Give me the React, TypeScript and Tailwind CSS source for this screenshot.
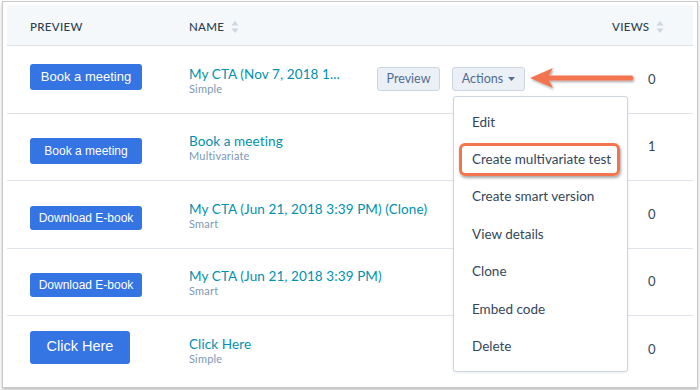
import React from "react";

const SortIcon = () => (
  <svg width="8" height="14" viewBox="0 0 8 14" className="ml-[7px]">
    <path d="M4 1 L7.5 5.5 H0.5 Z" fill="#cbd6e2" />
    <path d="M4 13 L7.5 8.5 H0.5 Z" fill="#cbd6e2" />
  </svg>
);

const rows = [
  { btn: "Book a meeting", btnCls: "w-[112px] h-[26px] text-[13px] -mt-[5px]", name: "My CTA (Nov 7, 2018 1...", sub: "Simple", views: "0" },
  { btn: "Book a meeting", btnCls: "w-[112px] h-[26px] text-[12px] mt-[8px]", name: "Book a meeting", sub: "Multivariate", views: "1" },
  { btn: "Download E-book", btnCls: "w-[112px] h-[24px] text-[12px] mt-[8px]", name: "My CTA (Jun 21, 2018 3:39 PM) (Clone)", sub: "Smart", views: "0" },
  { btn: "Download E-book", btnCls: "w-[112px] h-[24px] text-[12px] mt-[7px]", name: "My CTA (Jun 21, 2018 3:39 PM)", sub: "Smart", views: "0" },
  { btn: "Click Here", btnCls: "w-[100px] h-[33px] text-[14.5px] -mt-[5px]", name: "Click Here", sub: "Simple", views: "0" },
];

const menu = [
  "Edit",
  "Create multivariate test",
  "Create smart version",
  "View details",
  "Clone",
  "Embed code",
  "Delete",
];

export default function App() {
  return (
    <div className="relative w-[700px] h-[390px] bg-white overflow-hidden" style={{ fontFamily: "Lato, 'Open Sans', sans-serif" }}>
      <div className="ml-[2px] mt-[1px] w-[696px] h-[387px] border border-[#c9c9c9] bg-white shadow-[0_2px_3px_rgba(0,0,0,0.25)] px-[4px] pt-[3px]">
        {/* header */}
        <div className="flex items-center h-[41px] pt-[3px] bg-[#f5f8fa] border-b border-[#dfe3eb] text-[11.5px] font-medium text-[#2d3e50] tracking-[0.3px]">
          <div className="w-[182px] pl-[23px]">PREVIEW</div>
          <div className="flex-1 flex items-center">NAME<SortIcon /></div>
          <div className="w-[81px] flex items-center">VIEWS<SortIcon /></div>
        </div>
        {rows.map((r, i) => (
          <div key={i} className={`flex items-center h-[67.5px] ${i < 4 ? "border-b border-[#dfe3eb]" : ""}`}>
            <div className="w-[182px] pl-[23px] flex items-center">
              <div
                className={`${r.btnCls} bg-[#3574e3] rounded-[3px] text-white flex items-center justify-center`}
                style={{ fontFamily: "'Liberation Sans', Arial, sans-serif" }}
              >
                {r.btn}
              </div>
            </div>
            <div className="flex-1 flex items-center">
              <div className="flex flex-col mt-[2px]">
                <span className="text-[#0091ae] text-[13.5px] leading-[17px] tracking-[0.1px]">{r.name}</span>
                <span className="text-[#7c98b6] text-[11px] leading-[12px] tracking-[0.2px]">{r.sub}</span>
              </div>
              {i === 0 && (
                <div className="ml-auto mr-[87px] flex items-center gap-[12px] text-[12.5px] text-[#506e91]">
                  <div className="w-[63px] h-[24px] rounded-[3px] border border-[#cbd6e2] bg-[#eaf0f6] flex items-center justify-center">Preview</div>
                  <div className="w-[73px] h-[24px] rounded-[3px] border border-[#cbd6e2] bg-[#eaf0f6] flex items-center justify-center">
                    Actions
                    <svg width="7" height="4" viewBox="0 0 7 4" className="ml-[5px]"><path d="M0 0 H7 L3.5 4 Z" fill="#506e91" /></svg>
                  </div>
                </div>
              )}
            </div>
            <div className="w-[81px] pl-[36px] text-[13px] text-[#33475b]">{r.views}</div>
          </div>
        ))}
      </div>

      {/* arrow */}
      <svg className="absolute left-[527px] top-[64px]" width="112" height="30" viewBox="0 0 112 30">
        <defs>
          <filter id="sh" x="-10%" y="-30%" width="120%" height="160%">
            <feDropShadow dx="1" dy="1.5" stdDeviation="1.2" floodColor="#000" floodOpacity="0.35" />
          </filter>
        </defs>
        <g filter="url(#sh)">
          <path d="M3 14 L26 4 L22 11.5 L105 11.5 Q108 14 105 16.5 L22 16.5 L26 24 Z" fill="#f2754f" />
        </g>
      </svg>

      {/* dropdown */}
      <div className="absolute left-[453px] top-[96px] w-[175px] h-[276px] bg-white border border-[#cbd6e2] rounded-[3px] shadow-[0_1px_3px_rgba(0,0,0,0.08)] pt-[6px]">
        {menu.map((m) => (
          <div key={m} className="h-[37.4px] flex items-center pl-[18px] text-[13.5px] text-[#33475b]">{m}</div>
        ))}
      </div>
      {/* highlight */}
      <div className="absolute left-[459px] top-[143px] w-[161px] h-[33px] border-[3px] border-[#f2754f] rounded-[6px] shadow-[1px_2px_3px_rgba(0,0,0,0.35)]" />
    </div>
  );
}
